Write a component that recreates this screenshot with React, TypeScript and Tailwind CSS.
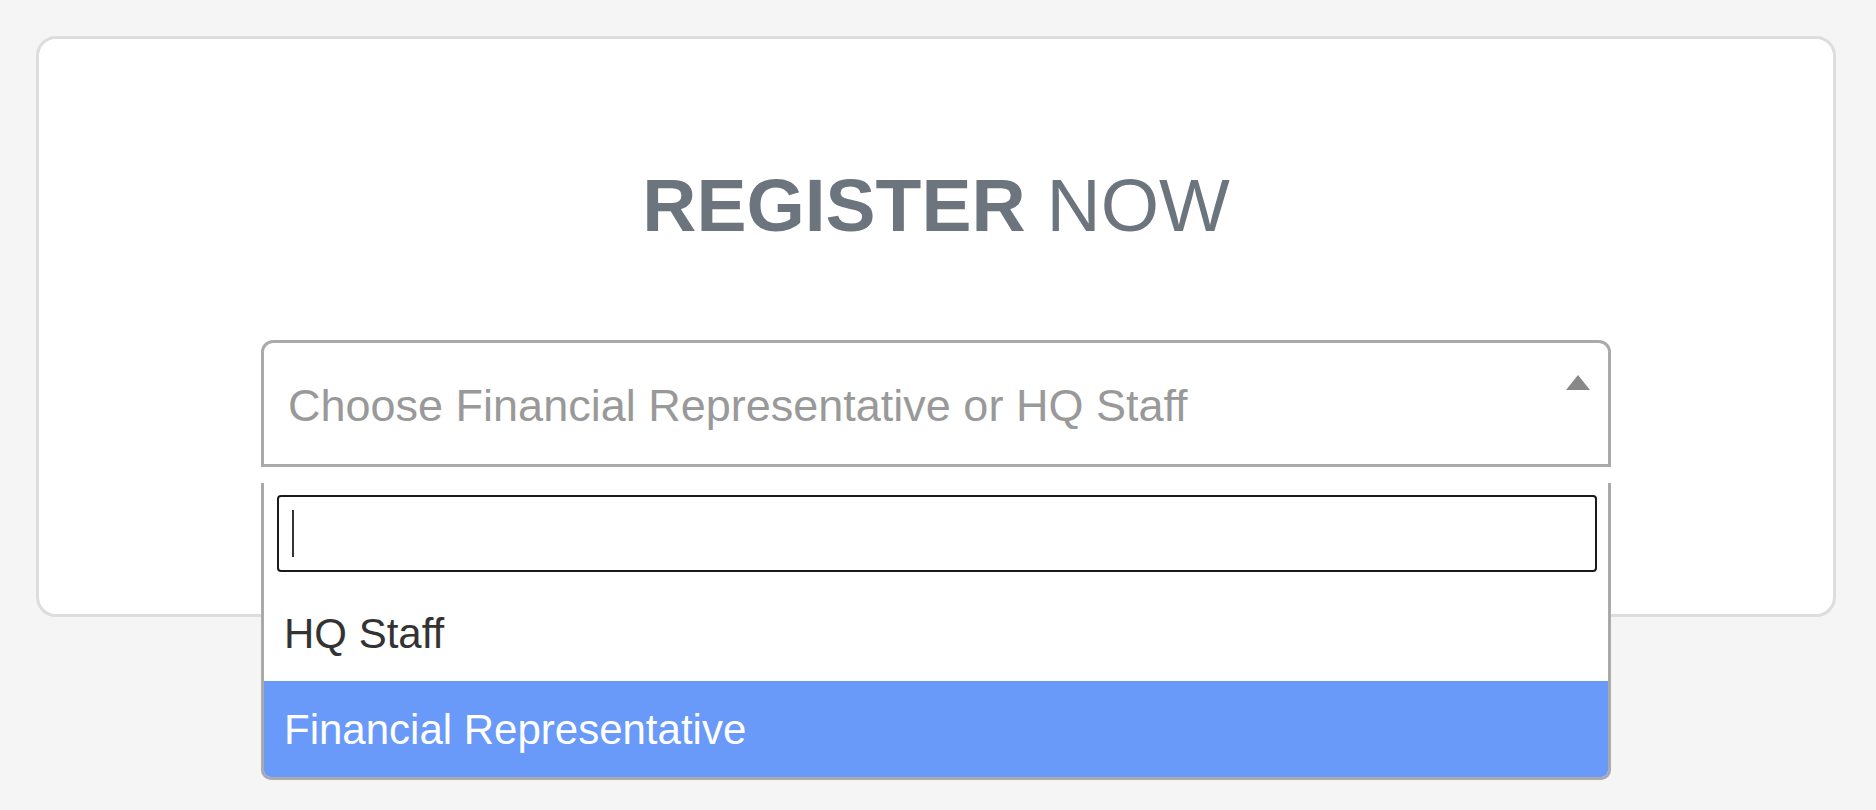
const options = [
  { label: "HQ Staff", active: false },
  { label: "Financial Representative", active: true },
];

const RegisterCard = () => {
  return (
    <div className="w-[1800px] border-[3px] border-[#ddd] rounded-[20px] bg-white pt-[129px] pb-[147px]">
      <h1 className="text-center text-[75px] leading-[75px] text-[#6c757d]">
        <span className="font-bold">REGISTER</span> NOW
      </h1>

      <div className="relative mx-auto mt-[97px] w-[1350px]">
        <div className="flex h-[127px] items-start justify-between rounded-t-[12px] border-[3px] border-[#aaa] bg-white">
          <span className="mt-[40px] pl-[24px] text-[45px] leading-[45px] text-[#999]">
            Choose Financial Representative or HQ Staff
          </span>
          <svg width="24" height="15" viewBox="0 0 24 15" className="mt-[32px] mr-[18px]">
            <path d="M12 0 L24 15 L0 15 Z" fill="#888" />
          </svg>
        </div>

        <div className="absolute left-0 top-[143px] w-full overflow-hidden rounded-b-[10px] border-x-[3px] border-b-[3px] border-[#aaa] bg-white">
          <div className="pt-[12px] pl-[13px] pr-[11px]">
            <div className="flex h-[77px] items-center rounded-[4px] border-2 border-[#1a1a1a]">
              <div className="ml-[13px] h-[47px] w-[2px] bg-[#333]" />
            </div>
          </div>
          <ul className="mt-[13px]">
            {options.map((o) => (
              <li
                key={o.label}
                className={
                  o.active
                    ? "flex h-[96px] items-center pl-[20px] text-[42px] text-white bg-[#6999f9]"
                    : "flex h-[96px] items-center pl-[20px] text-[42px] text-[#333]"
                }
              >
                {o.label}
              </li>
            ))}
          </ul>
        </div>
      </div>
    </div>
  );
};

export default function App() {
  return (
    <div className="min-h-screen bg-[#f5f5f5] pt-[36px] pl-[36px] font-['Liberation_Sans',Arial,sans-serif]">
      <RegisterCard />
    </div>
  );
}
